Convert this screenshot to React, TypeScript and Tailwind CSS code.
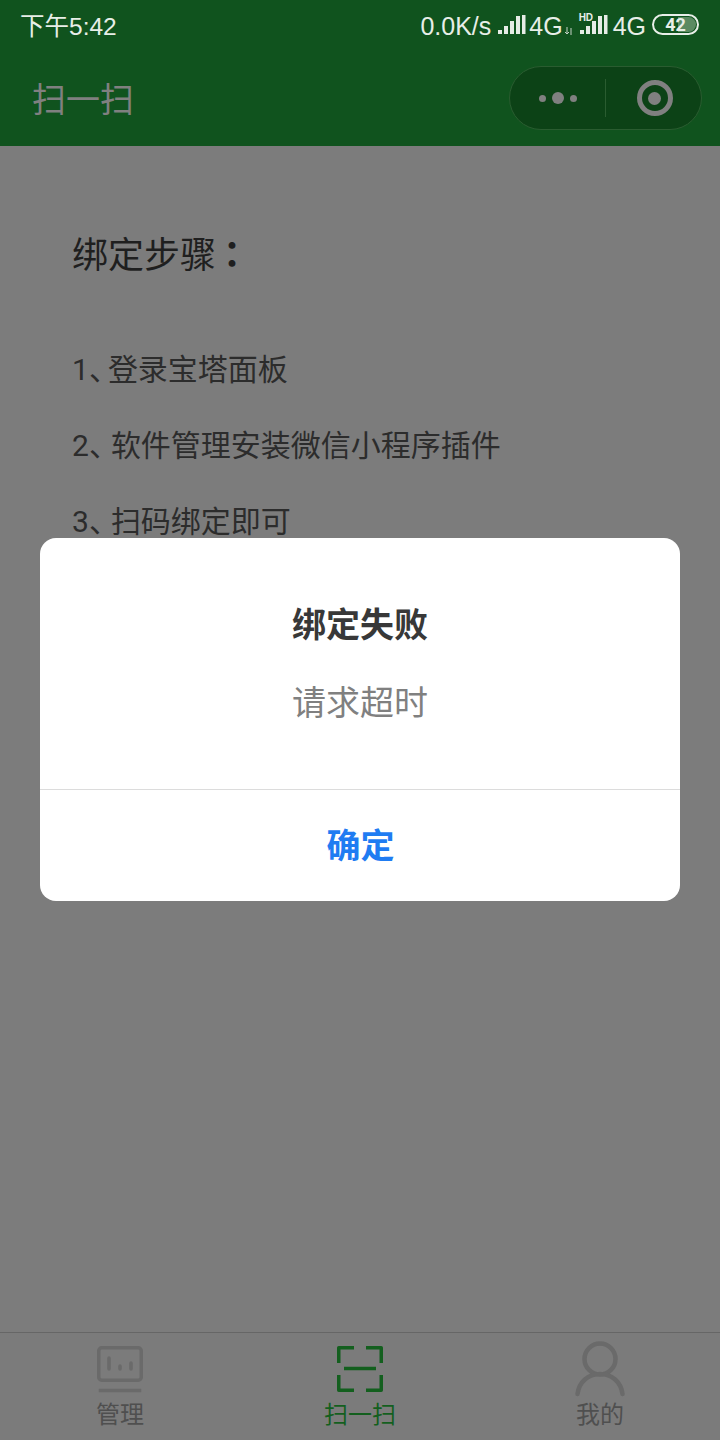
const cjk = "font-['Roboto','Noto_Sans_CJK_SC',sans-serif]";

function Signal({ className }: { className?: string }) {
  return (
    <svg width="28" height="20" viewBox="0 0 28 20" className={className} fill="#e6ece6">
      <rect x="0" y="15" width="4" height="4" />
      <rect x="6" y="11" width="4" height="8" />
      <rect x="12" y="6" width="4" height="13" />
      <rect x="18" y="1" width="4" height="18" />
      <rect x="24" y="0" width="3.5" height="19" />
    </svg>
  );
}

function StatusBar() {
  return (
    <div className="flex h-[54px] items-center justify-between px-[21px] font-['Liberation_Sans','Noto_Sans_CJK_SC',sans-serif] text-[25px] text-[#e8eee8]">
      <span className="-ml-[1px] text-[24.5px]">下午5:42</span>
      <div className="flex items-center">
        <span>0.0K/s</span>
        <Signal className="mb-[4px] ml-[7px]" />
        <span className="ml-[3px]">4G</span>
        <svg width="9" height="8" viewBox="0 0 9 8" className="ml-[1px] mt-[7px]" fill="none" stroke="#c5d2c6" strokeWidth="1">
          <path d="M3 0v7M1 5l2 2 2-2M7 8V1" />
        </svg>
        <div className="relative ml-[7px]">
          <span className="absolute -top-[2px] -left-[1px] text-[10px] font-bold leading-none">HD</span>
          <Signal className="mb-[4px]" />
        </div>
        <span className="ml-[5px]">4G</span>
        <div className="relative mb-[5px] ml-[6px] flex h-[21px] w-[47px] items-center justify-center overflow-hidden rounded-full border-2 border-[#e8eee8]">
          <div className="absolute inset-y-[1px] right-[1px] w-[18px] rounded-r-full bg-[#5b8a62]" />
          <span className="relative font-['Roboto',sans-serif] text-[18px] font-bold leading-none">42</span>
        </div>
      </div>
    </div>
  );
}

function Capsule() {
  return (
    <div className="flex h-[64px] w-[193px] items-center rounded-full border border-[#2a5c30] bg-[#0c4216]">
      <div className="flex w-[95px] items-center justify-center gap-[6px]">
        <span className="h-[7px] w-[7px] rounded-full bg-[#808080]" />
        <span className="h-[12px] w-[12px] rounded-full bg-[#808080]" />
        <span className="h-[7px] w-[7px] rounded-full bg-[#808080]" />
      </div>
      <div className="h-[38px] w-px bg-[#2a5c30]" />
      <div className="flex flex-1 items-center justify-center pl-[2px]">
        <div className="flex h-[36px] w-[36px] items-center justify-center rounded-full border-[5px] border-[#808080]">
          <span className="h-[13px] w-[13px] rounded-full bg-[#808080]" />
        </div>
      </div>
    </div>
  );
}

function Tab({ label, active, children }: { label: string; active?: boolean; children: React.ReactNode }) {
  return (
    <div className="flex flex-1 flex-col items-center">
      <div className="h-[54px]">{children}</div>
      <span className={`mt-[2px] text-[24px] leading-[32px] ${active ? "text-[#135f1e]" : "text-[#4f4f4f]"}`}>{label}</span>
    </div>
  );
}

export default function App() {
  return (
    <div className={`relative flex h-[1440px] w-[720px] flex-col overflow-hidden bg-[#7c7c7c] ${cjk}`}>
      <div className="h-[146px] bg-[#10531e]">
        <StatusBar />
        <div className="flex items-center justify-between pl-[32px] pr-[18px] pt-[12px]">
          <span className="pt-[3px] text-[34px] leading-[50px] text-[#808080]">扫一扫</span>
          <Capsule />
        </div>
      </div>

      <div className="flex-1 pl-[72px] pt-[85px] text-[#1f1f1f]">
        <h1 className="h-[50px] text-[36px] font-normal leading-[50px]">
          绑定步骤<span className="-ml-[2px] font-['Noto_Sans_CJK_TC',sans-serif] font-bold leading-none">：</span>
        </h1>
        <div className="mt-[71px] flex flex-col gap-[40px] text-[30px] leading-[36px] text-[#2c2c2c]">
          <p>1<span className="tracking-[-11px]">、</span>登录宝塔面板</p>
          <p>2<span className="tracking-[-8px]">、</span>软件管理安装微信小程序插件</p>
          <p>3<span className="tracking-[-8px]">、</span>扫码绑定即可</p>
        </div>
      </div>

      <div className="flex h-[108px] border-t border-[#666666] bg-[#7b7b7b] pt-[10px]">
        <Tab label="管理">
          <svg width="48" height="54" viewBox="0 0 48 54" fill="none" stroke="#6a6a6a" strokeWidth="3.5" strokeLinecap="round">
            <rect x="2.75" y="4.75" width="42.5" height="32.5" rx="3" />
            <path d="M13 15v11M24 23v3M35 20v6" />
            <path d="M2.75 47.5h42.5" strokeLinecap="butt" />
          </svg>
        </Tab>
        <Tab label="扫一扫" active>
          <svg width="48" height="54" viewBox="0 0 48 54" fill="none" stroke="#135f1e" strokeWidth="3.5" strokeLinejoin="round">
            <path d="M18 4.75H2.75V20M30 4.75h15.25V20M18 47.25H2.75V32M30 47.25h15.25V32M8 25.5h32" />
          </svg>
        </Tab>
        <Tab label="我的">
          <svg width="52" height="57" viewBox="0 0 52 57" className="-mt-[3px]" fill="none" stroke="#6a6a6a" strokeWidth="4.5" strokeLinecap="round">
            <circle cx="26" cy="19" r="15.5" />
            <path d="M3.5 54C5 42 14 34 26 34S47 42 48.5 54" />
          </svg>
        </Tab>
      </div>

      <div className="absolute inset-x-[40px] top-[538px] flex h-[363px] flex-col rounded-[16px] bg-white">
        <div className="flex h-[252px] flex-col items-center border-b border-[#dcdcdc] pt-[65px]">
          <h2 className="text-[34px] font-bold leading-[44px] text-[#383838]">绑定失败</h2>
          <p className="mt-[34px] text-[34px] leading-[44px] text-[#808080]">请求超时</p>
        </div>
        <div className="flex flex-1 items-center justify-center pl-[1px] pt-[1px] text-[34px] font-bold text-[#1f7cf2]">确定</div>
      </div>
    </div>
  );
}
